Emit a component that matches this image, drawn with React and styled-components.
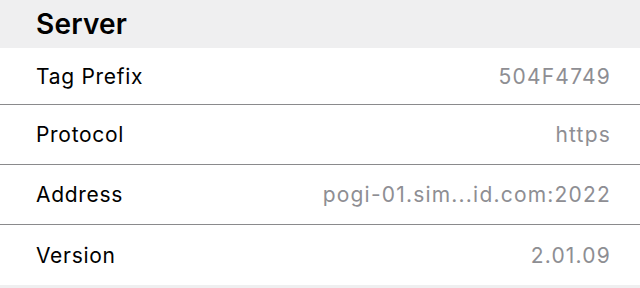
import React from "react";
import styled, { createGlobalStyle } from "styled-components";

const Global = createGlobalStyle`
  html, body { margin: 0; padding: 0; background: #efeff0; }
  body { font-family: Inter, "Noto Sans", "Liberation Sans", sans-serif; }
`;

const Page = styled.div`
  width: 640px;
  height: 288px;
  background: #efeff0;
  overflow: hidden;
`;

const SectionHeader = styled.div`
  height: 48px;
  display: flex;
  align-items: center;
  padding: 0 36px;
  font-size: 28px;
  font-weight: 600;
  color: #000;
  letter-spacing: 0.2px;
`;

const List = styled.div`
  background: #fff;
  display: flex;
  flex-direction: column;
`;

const Row = styled.div`
  display: flex;
  align-items: center;
  justify-content: space-between;
  height: 59px;
  padding: 0 29px 0 36px;
  border-bottom: 1px solid #8a8a8c;
  &:first-child { height: 56px; }
  &:last-child { border-bottom: none; height: 60px; }
`;

const Label = styled.span`
  font-size: 21px;
  letter-spacing: 0.7px;
  color: #000;
`;

const Value = styled.span`
  font-size: 21px;
  letter-spacing: 1.2px;
  color: #8e8e93;
`;

const rows = [
  ["Tag Prefix", "504F4749"],
  ["Protocol", "https"],
  ["Address", "pogi-01.sim...id.com:2022"],
  ["Version", "2.01.09"],
];

export default function App() {
  return (
    <Page>
      <Global />
      <SectionHeader>Server</SectionHeader>
      <List>
        {rows.map(([k, v]) => (
          <Row key={k}>
            <Label>{k}</Label>
            <Value>{v}</Value>
          </Row>
        ))}
      </List>
    </Page>
  );
}
